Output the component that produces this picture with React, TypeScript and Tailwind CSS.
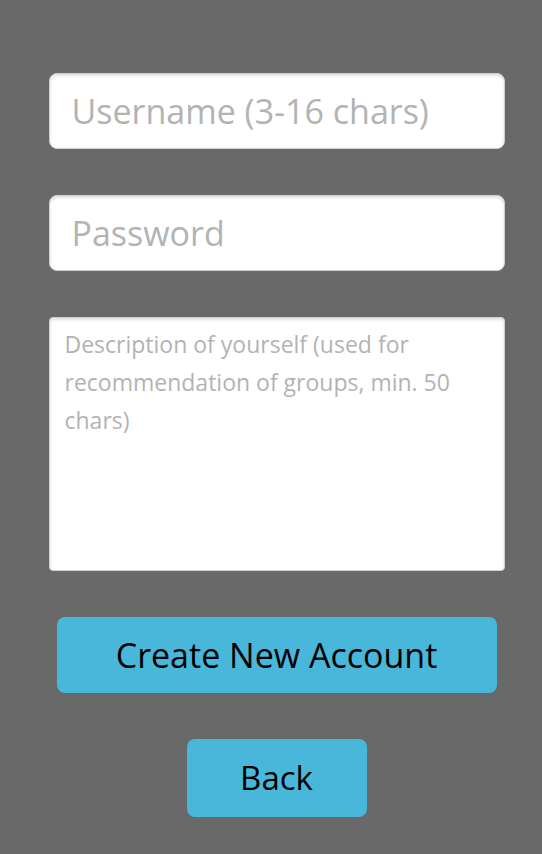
export default function App() {
  return (
    <div className="min-h-[854px] w-full bg-[#696969] flex flex-col items-center pl-[11px] pt-[73px] gap-[46px]" style={{ fontFamily: '"Open Sans", "Noto Sans", sans-serif' }}>
      <input
        type="text"
        placeholder="Username (3-16 chars)"
        className="w-[456px] h-[76px] rounded-lg bg-white border border-[#cfcfcf] shadow-[inset_0_2px_3px_rgba(0,0,0,0.12)] px-[22px] text-[34px] text-black placeholder:text-[#b3b3b3] outline-none"
      />
      <input
        type="password"
        placeholder="Password"
        className="w-[456px] h-[76px] rounded-lg bg-white border border-[#cfcfcf] shadow-[inset_0_2px_3px_rgba(0,0,0,0.12)] px-[22px] text-[34px] text-black placeholder:text-[#b3b3b3] outline-none"
      />
      <textarea
        placeholder="Description of yourself (used for recommendation of groups, min. 50 chars)"
        className="w-[456px] h-[254px] rounded bg-white border border-[#cfcfcf] shadow-[inset_0_2px_3px_rgba(0,0,0,0.12)] px-[15px] pt-[7px] text-[23px] leading-[38px] text-black placeholder:text-[#b3b3b3] outline-none resize-none"
      />
      <button className="w-[440px] h-[76px] rounded-lg bg-[#48b7da] text-black text-[34px]">
        Create New Account
      </button>
      <button className="w-[180px] h-[78px] rounded-lg bg-[#48b7da] text-black text-[33px]">
        Back
      </button>
    </div>
  );
}
